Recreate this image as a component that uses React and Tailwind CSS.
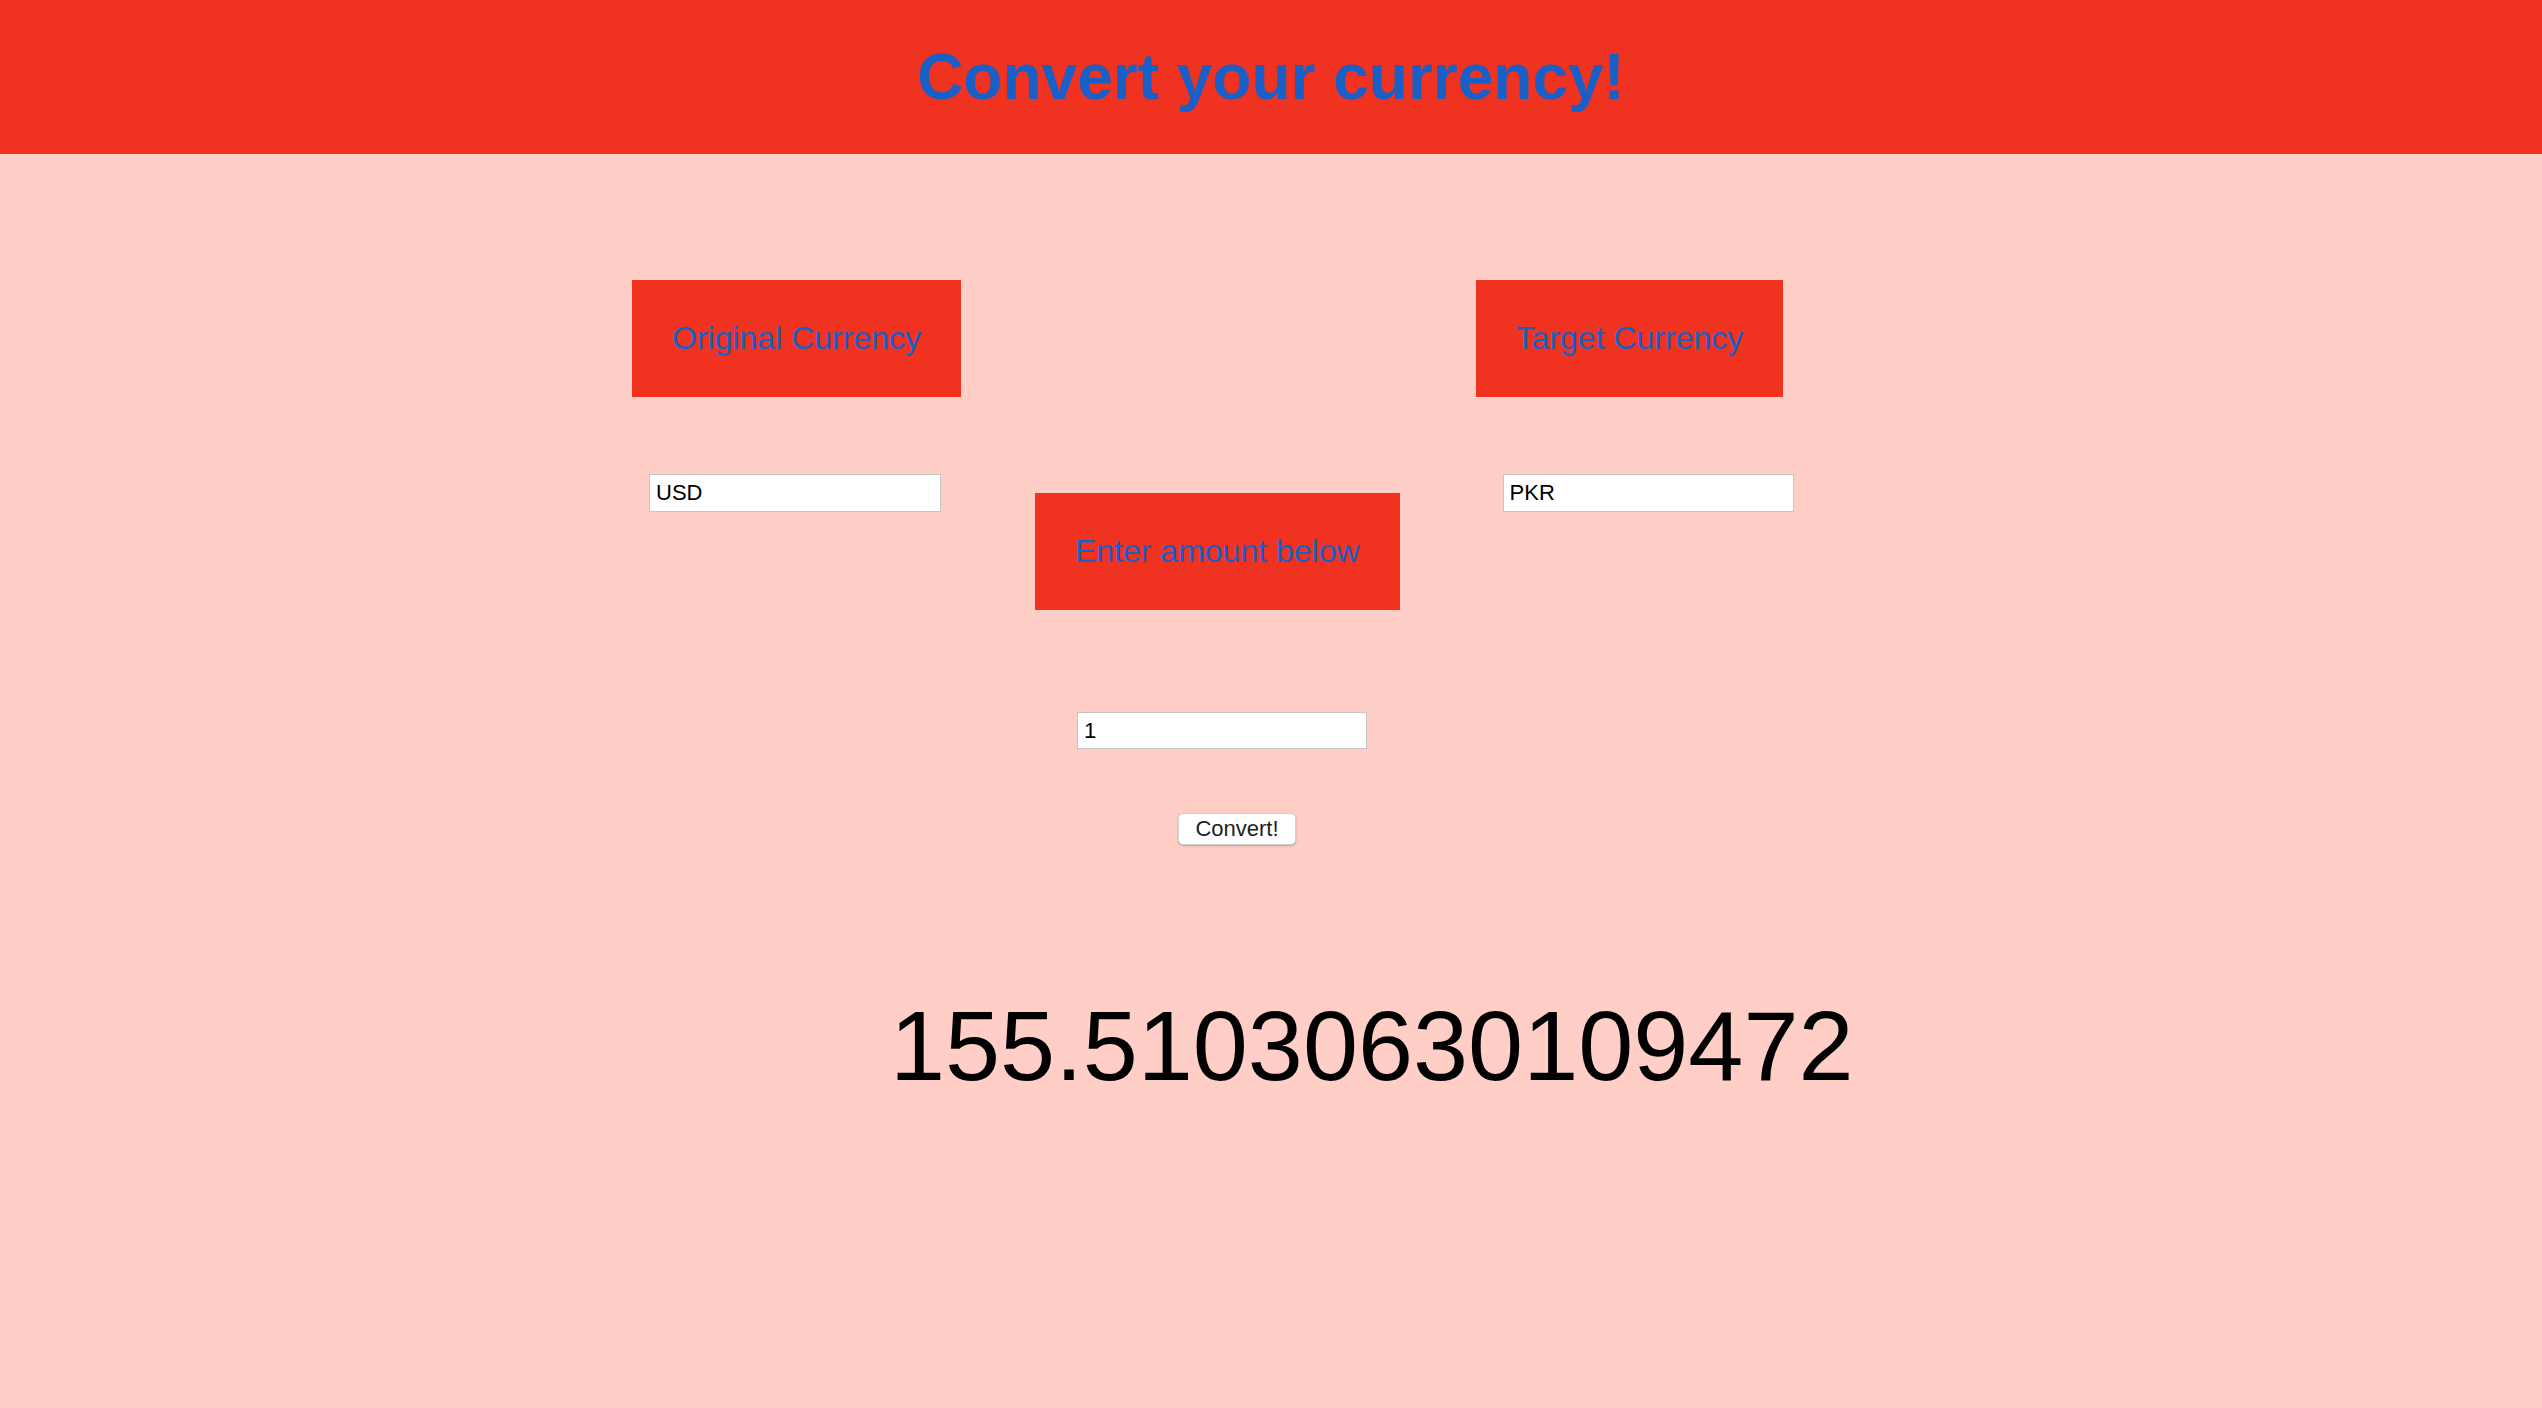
export default function App() {
  const font = { fontFamily: '"Liberation Sans", Arial, sans-serif' };

  return (
    <div className="min-h-screen bg-[#ffcfc7] leading-[normal]" style={font}>
      <header className="flex h-[154px] items-center justify-center bg-[#f03220]">
        <h1 className="text-[64px] font-bold text-[#1a5fc6]">
          Convert your currency!
        </h1>
      </header>

      <div className="ml-[632px] mt-[126px] flex items-start">
        {/* original currency */}
        <div className="flex flex-col items-start">
          <div className="bg-[#f03220] p-10 text-[32px] text-[#1a5fc6]">
            Original Currency
          </div>
          <input
            defaultValue="USD"
            className="ml-[17px] mt-[77px] h-[38px] w-[292px] border border-[#c4c4c4] bg-white pl-[6px] text-[22px] text-black outline-none"
          />
        </div>

        {/* amount */}
        <div className="ml-[74px] mt-[213px] flex flex-col items-start">
          <div className="bg-[#f03220] p-10 text-[32px] text-[#1a5fc6]">
            Enter amount below
          </div>
          <input
            defaultValue="1"
            className="ml-[42px] mt-[102px] h-[37px] w-[290px] border border-[#c4c4c4] bg-white pl-[6px] text-[22px] text-black outline-none"
          />
          <button className="ml-[143px] mt-[64px] h-[32px] w-[118px] rounded-[5px] border border-[#cfcfcf] bg-white text-[22px] text-[#222] shadow-[0_1px_2px_rgba(0,0,0,0.25)]">
            Convert!
          </button>
        </div>

        {/* target currency */}
        <div className="ml-[76px] flex flex-col items-start">
          <div className="bg-[#f03220] p-10 text-[32px] text-[#1a5fc6]">
            Target Currency
          </div>
          <input
            defaultValue="PKR"
            className="ml-[27px] mt-[77px] h-[38px] w-[291px] border border-[#c4c4c4] bg-white pl-[6px] text-[22px] text-black outline-none"
          />
        </div>
      </div>

      <div className="ml-[890px] mt-[151px] text-[99px] leading-none text-black">
        155.51030630109472
      </div>
    </div>
  );
}
